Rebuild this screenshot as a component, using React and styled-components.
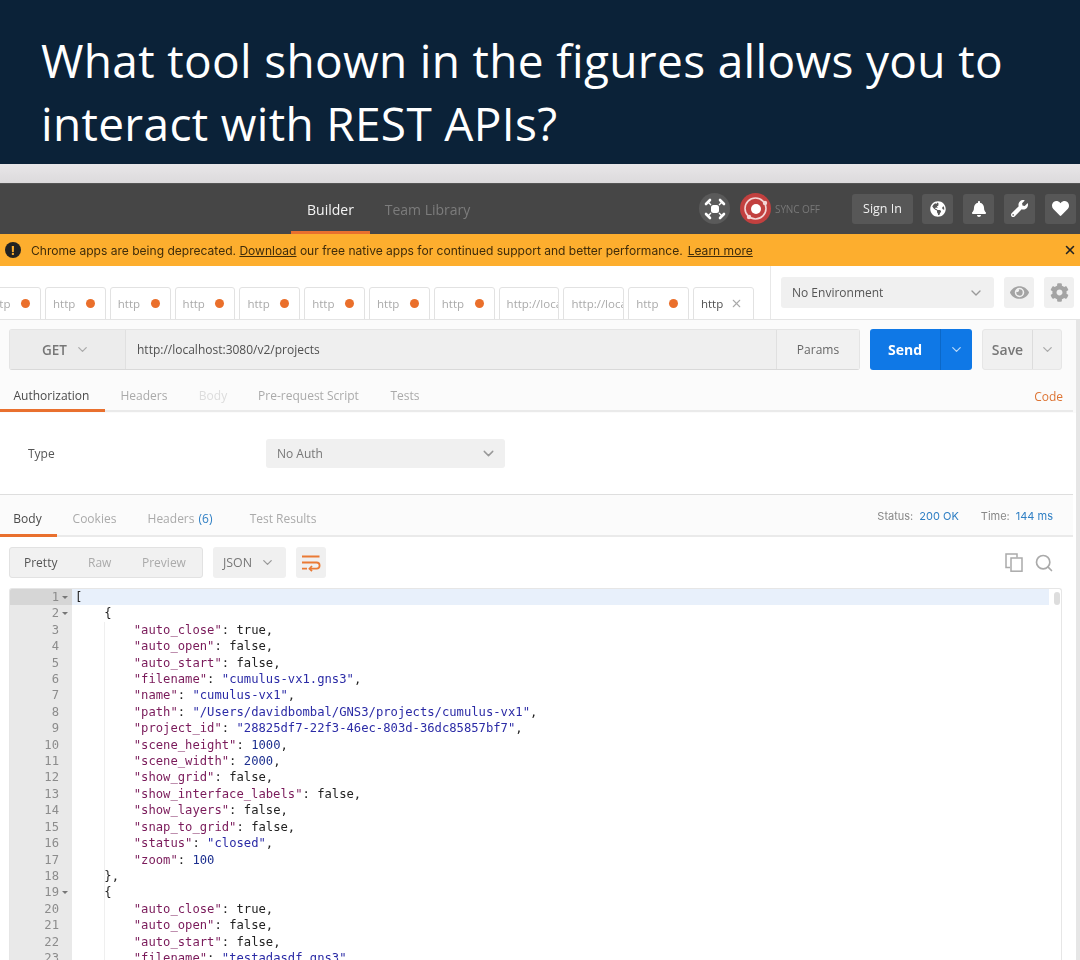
import React from "react";
import styled, { createGlobalStyle } from "styled-components";
import { ChevronDown, X, Search } from "lucide-react";
import { FaGlobeAmericas, FaCog, FaEye, FaBell, FaWrench, FaHeart } from "react-icons/fa";

const Global = createGlobalStyle`
  html, body { margin: 0; padding: 0; background: #fff; }
  body { width: 1080px; height: 960px; overflow: hidden; font-family: "Open Sans", sans-serif; }
  * { box-sizing: border-box; }
`;

const Page = styled.div`
  width: 1080px; height: 960px; overflow: hidden; display: flex; flex-direction: column;
`;
const Question = styled.header`
  height: 164px; flex: none; background: #0b2238; color: #fff;
  padding: 29px 0 0 41px;
  font-family: "Open Sans", sans-serif; font-size: 46px; font-weight: 500; line-height: 63px; letter-spacing: 0.33px;
  white-space: nowrap;
`;
const Shot = styled.div`
  flex: 1; min-height: 0; display: flex; flex-direction: column; filter: blur(0.35px);
`;
const Strip = styled.div`
  height: 19px; flex: none; background: linear-gradient(#e8e6e8, #dcdadc);
`;
const TopBar = styled.div`
  height: 51px; flex: none; background: #464646; display: flex; align-items: stretch; padding: 0 4px 0 291px;
  border-top: 1px solid #555;
`;
const NavTab = styled.div`
  display: flex; align-items: center; justify-content: center; height: 100%;
  width: ${p => p.$w}px; font-size: 14px; padding-top: 3px;
  color: ${p => (p.$on ? "#f4f4f4" : "#7c7c7c")};
  border-bottom: 3px solid ${p => (p.$on ? "#e9702e" : "transparent")};
  margin-left: ${p => p.$ml || 0}px;
`;
const TopRight = styled.div`
  margin-left: auto; display: flex; align-items: center; height: 100%; padding-bottom: 1px;
`;
const RoundIcon = styled.div`
  width: 31px; height: 31px; border-radius: 50%; background: ${p => p.$bg};
  display: flex; align-items: center; justify-content: center; flex: none;
  margin-right: ${p => p.$mr}px;
`;
const SyncLabel = styled.span`
  font-size: 10px; color: #787878; width: 47px; margin-right: 30px; white-space: nowrap; letter-spacing: -0.1px;
`;
const SignIn = styled.div`
  width: 61px; height: 30px; background: #575757; border-radius: 3px; color: #f0f0f0; font-size: 12.5px;
  display: flex; align-items: center; justify-content: center; margin-right: 9px;
`;
const TopIcon = styled.div`
  width: 31px; height: 30px; background: #575757; border-radius: 3px; color: #fff;
  display: flex; align-items: center; justify-content: center; margin-left: ${p => p.$ml || 0}px;
`;
const Banner = styled.div`
  height: 32px; flex: none; background: #fdae2e; display: flex; align-items: center; padding: 0 3px 0 5px;
  font-family: Inter, sans-serif; font-size: 12.06px; color: #3f2c0a; white-space: nowrap;
`;
const Alert = styled.span`
  width: 16px; height: 16px; border-radius: 50%; background: #222; color: #fdae2e; font-weight: 800; font-size: 12px;
  display: flex; align-items: center; justify-content: center; margin-right: 10px; flex: none;
`;
const BannerLink = styled.span`
  text-decoration: underline; margin-left: ${p => p.$ml || 0}px;
`;
const BannerClose = styled.span`
  margin-left: auto; display: flex; color: #222;
`;
const TabRow = styled.div`
  height: 54px; flex: none; display: flex; background: #fff; border-bottom: 1px solid #e4e4e4;
`;
const TabStrip = styled.div`
  width: 771px; flex: none; display: flex; align-items: flex-end; gap: 4px; overflow: hidden;
  border-right: 1px solid #e8e8e8;
`;
const ReqTab = styled.div`
  flex: none; width: 60.8px; height: 33px; margin-bottom: -1px; border: 1px solid #e2e2e2; border-radius: 3px 3px 0 0;
  display: flex; align-items: center; padding: 0 ${p => (p.$cut ? 0 : 10)}px 0 7px; font-size: 11.5px;
  color: ${p => (p.$on ? "#505050" : "#aaa")}; overflow: hidden; white-space: nowrap;
  background: #fff;
  &:first-child { margin-left: -19.8px; }
`;
const Dot = styled.span`
  width: 9px; height: 9px; border-radius: 50%; background: #ea6f2b; margin-left: auto; flex: none;
`;
const TabClose = styled.span`
  margin-left: auto; color: #aaa; display: flex;
`;
const EnvArea = styled.div`
  flex: 1; display: flex; align-items: flex-start; padding: 11px 0 0 10px; gap: 10px;
`;
const EnvSelect = styled.div`
  width: 213px; height: 31px; background: #f0f0f0; border-radius: 3px; display: flex; align-items: center;
  justify-content: space-between; padding: 0 10px 0 11px; font-size: 12px; color: #555;
`;
const EnvBtn = styled.div`
  width: 30px; height: 31px; background: #f0f0f0; border-radius: 3px; color: #a4a4a4;
  display: flex; align-items: center; justify-content: center;
`;
const Body = styled.div`
  flex: 1; min-height: 0; display: flex; background: #fff;
`;
const Main = styled.div`
  width: 1076px; flex: none; display: flex; flex-direction: column; min-height: 0;
`;
const PageBar = styled.div`
  flex: 1; background: #e6e6e6;
`;
const RequestPanel = styled.div`
  height: 93px; flex: none; background: #fbfbfb; padding: 9px 14px 0 9px; display: flex; flex-direction: column;
`;
const RequestRow = styled.div`
  display: flex; height: 41px; flex: none;
`;
const UrlGroup = styled.div`
  width: 851px; display: flex; background: #efefef; border: 1px solid #e4e4e4; border-bottom-color: #d9d9d9; border-radius: 3px;
`;
const Method = styled.div`
  width: 116px; background: #ececec; border-right: 1px solid #e0e0e0; display: flex; align-items: center;
  padding-left: 32px; gap: 8px; font-size: 13.5px; font-weight: 600; color: #777;
`;
const Url = styled.div`
  flex: 1; display: flex; align-items: center; padding: 0 0 0 11px; font-size: 12px; color: #505050;
`;
const Params = styled.div`
  width: 83px; border-left: 1px solid #e0e0e0; display: flex; align-items: center; justify-content: center;
  font-size: 12px; color: #666; background: #f1f1f1;
`;
const Send = styled.div`
  width: 102px; margin-left: 10px; background: #0f78e6; border-radius: 3px; display: flex; color: #fff;
`;
const SendLabel = styled.div`
  width: 71px; display: flex; align-items: center; justify-content: center; font-size: 14px; font-weight: 700;
  border-right: 1px solid #0b68c8;
`;
const SendCaret = styled.div`
  flex: 1; display: flex; align-items: center; justify-content: center; color: #b9d8f7;
`;
const Save = styled.div`
  width: 80px; margin-left: 10px; background: #f0f0f0; border: 1px solid #e6e6e6; border-radius: 3px; display: flex; color: #777;
`;
const SaveLabel = styled.div`
  width: 50px; display: flex; align-items: center; justify-content: center; font-size: 14px; font-weight: 600;
  border-right: 1px solid #dcdcdc;
`;
const SaveCaret = styled.div`
  flex: 1; display: flex; align-items: center; justify-content: center; color: #aaa;
`;
const TabsBar = styled.div`
  height: 42px; flex: none; display: flex; align-items: stretch; background: #fbfbfb;
  border-bottom: 2px solid #eaeaea; margin-right: 3px;
`;
const RequestTabs = styled(TabsBar)`
  margin: 9px -11px 0 -9px; height: 33px;
`;
const TextTab = styled.div`
  display: flex; align-items: center; justify-content: center; font-size: 12px; white-space: nowrap;
  width: ${p => p.$w}px; margin-left: ${p => p.$ml || 0}px; height: calc(100% + 2px);
  padding: ${p => p.$pt}px ${p => (p.$on ? 2 : 0)}px 0 0;
  color: ${p => (p.$on ? "#4a4a4a" : p.$faint ? "#dcdcdc" : "#aaa")};
  border-bottom: 3px solid ${p => (p.$on ? "#e9702e" : "transparent")};
`;
const CodeLink = styled.div`
  margin-left: auto; align-self: center; font-size: 12px; color: #dd7433; margin-right: 10px; padding-top: 4px;
`;
const AuthPanel = styled.div`
  height: 82px; flex: none; background: #fff; border-bottom: 1px solid #dedede; display: flex; align-items: center;
  padding: 0 0 0 28px; margin-right: 3px;
`;
const TypeLabel = styled.div`
  width: 238px; font-size: 12px; color: #555;
`;
const AuthSelect = styled.div`
  width: 239px; height: 29px; background: #f0f0f0; border-radius: 3px; display: flex; align-items: center;
  justify-content: space-between; padding: 0 8px 0 11px; font-size: 12px; color: #777;
`;
const StatusBar = styled.div`
  margin-left: auto; align-self: center; padding: 2px 20px 0 0; display: flex; font-family: Inter, sans-serif; font-size: 11px; color: #888;
`;
const StatusKey = styled.span`
  margin-left: ${p => p.$ml || 0}px;
`;
const StatusValue = styled.span`
  color: #2f7fc4; margin-left: 6px;
`;
const Count = styled.span`
  color: #2f7fc4; margin-left: 4px;
`;
const ResponseBody = styled.div`
  flex: 1; min-height: 0; display: flex; flex-direction: column; background: #fff; padding: 10px 14px 0 9px;
`;
const Toolbar = styled.div`
  height: 31px; flex: none; display: flex; align-items: stretch; margin-bottom: 10px;
`;
const ViewGroup = styled.div`
  width: 194px; display: flex; background: #f1f1f1; border: 1px solid #e2e2e2; border-radius: 3px; align-items: center;
  padding-left: 14px; font-size: 12px; color: #aaa;
`;
const ViewItem = styled.span`
  width: ${p => p.$w}px; color: ${p => (p.$on ? "#555" : "#aaa")};
`;
const LangSelect = styled.div`
  width: 73px; margin-left: 10px; background: #f0f0f0; border-radius: 3px; display: flex; align-items: center;
  padding-left: 10px; gap: 8px; font-size: 12.4px; color: #777;
`;
const WrapBtn = styled.div`
  width: 30px; margin-left: 10px; background: #f0f0f0; border-radius: 3px; display: flex; align-items: center; justify-content: center;
`;
const ToolIcons = styled.div`
  margin-left: auto; display: flex; align-items: center; gap: 11px; color: #aaa; padding-right: 8px;
`;
const Editor = styled.div`
  flex: 1; min-height: 0; display: flex; overflow: hidden; border: 1px solid #e6e6e6; border-bottom: 0; border-radius: 3px 3px 0 0;
  font-family: "DejaVu Sans Mono", monospace; font-size: 12.2px; line-height: 16.41px;
`;
const Gutter = styled.div`
  width: 62px; flex: none; background: #e9e9e9; color: #8c8c8c;
`;
const GutterLine = styled.div`
  height: 16.41px; padding-right: 13px; text-align: right; position: relative; white-space: nowrap;
  background: ${p => (p.$active ? "#d6d6d6" : "transparent")};
`;
const Fold = styled.span`
  position: absolute; right: 4px; top: 7px; width: 0; height: 0; border-left: 3px solid transparent;
  border-right: 3px solid transparent; border-top: 3px solid #777;
`;
const Code = styled.div`
  flex: 1; min-width: 0; position: relative;
`;
const CodeLine = styled.div`
  height: 16.41px; padding-left: 3px; white-space: pre; color: #222;
  background: ${p => (p.$active ? "#e8f0fb" : "transparent")};
  margin-right: 12px;
`;
const Guide = styled.div`
  position: absolute; left: 32px; top: 33px; bottom: 0; width: 1px; background: #efefef;
`;
const Thumb = styled.div`
  position: absolute; right: 1px; top: 3px; width: 6px; height: 13px; border-radius: 3px; background: #ddd;
`;
const KeyTok = styled.span` color: #7a1a5a; `;
const StrTok = styled.span` color: #2b2ba6; `;
const NumTok = styled.span` color: #1c2f8f; `;

const SatelliteIcon = () => (
  <svg width="24" height="24" viewBox="0 0 24 24" fill="none" stroke="#fff">
    <rect x="8" y="8" width="8" height="8" rx="2.5" fill="#fff" stroke="none" />
    <path d="M8 8 5.5 5.5M16 8l2.5-2.5M8 16l-2.5 2.5M16 16l2.5 2.5" strokeWidth="1.4" />
    <path d="M3 7 7 3M17 3l4 4M3 17l4 4M21 17l-4 4" strokeWidth="2.6" strokeLinecap="round" />
  </svg>
);
const SyncIcon = () => (
  <svg width="27" height="27" viewBox="0 0 27 27" fill="none">
    <circle cx="13.5" cy="13.5" r="10.5" stroke="#f3d6d6" strokeWidth="1.6" />
    <circle cx="14" cy="14" r="5" fill="#fff" />
    <circle cx="23" cy="8" r="2.2" fill="#f3d6d6" />
    <circle cx="7" cy="22" r="2.2" fill="#f3d6d6" />
  </svg>
);
const WrapIcon = () => (
  <svg width="20" height="18" viewBox="0 0 20 18" fill="none" stroke="#ea7a35" strokeWidth="1.8">
    <path d="M1 2.5h17.5M1 8.5h14.5a2.8 2.8 0 0 1 0 6.2H9" />
    <path d="M1 14.7h5M11 12l-2.5 2.7L11 17.2" />
  </svg>
);
const CopyIcon = () => (
  <svg width="18" height="19" viewBox="0 0 18 19" fill="none" stroke="#aaa" strokeWidth="1.5">
    <path d="M5 14.5H1V1h11v3.5" />
    <rect x="6" y="5" width="11" height="13.2" />
  </svg>
);

const kv = (k, v, t) => ({ k, v, t });
const obj = [
  kv("auto_close", "true"), kv("auto_open", "false"), kv("auto_start", "false"),
  kv("filename", "cumulus-vx1.gns3", "s"), kv("name", "cumulus-vx1", "s"),
  kv("path", "/Users/davidbombal/GNS3/projects/cumulus-vx1", "s"),
  kv("project_id", "28825df7-22f3-46ec-803d-36dc85857bf7", "s"),
  kv("scene_height", "1000", "n"), kv("scene_width", "2000", "n"),
  kv("show_grid", "false"), kv("show_interface_labels", "false"), kv("show_layers", "false"),
  kv("snap_to_grid", "false"), kv("status", "closed", "s"), kv("zoom", "100", "n"),
];
const lines = [
  { raw: "[", fold: true },
  { raw: "    {", fold: true },
  ...obj,
  { raw: "    }," },
  { raw: "    {", fold: true },
  kv("auto_close", "true"), kv("auto_open", "false"), kv("auto_start", "false"),
  kv("filename", "testadasdf.gns3", "s"),
];

const Value = ({ l }) => {
  if (l.t === "s") return <StrTok>"{l.v}"</StrTok>;
  if (l.t === "n") return <NumTok>{l.v}</NumTok>;
  return l.v;
};

const tabs = Array.from({ length: 12 });

export default function App() {
  return (
    <Page>
      <Global />
      <Question>What tool shown in the figures allows you to<br />interact with REST APIs?</Question>
      <Shot>
        <Strip />
        <TopBar>
          <NavTab $w={79} $on>Builder</NavTab>
          <NavTab $w={87} $ml={14}>Team Library</NavTab>
          <TopRight>
            <RoundIcon $bg="#5a5a5a" $mr={10}><SatelliteIcon /></RoundIcon>
            <RoundIcon $bg="#c2403f" $mr={4}><SyncIcon /></RoundIcon>
            <SyncLabel>SYNC OFF</SyncLabel>
            <SignIn>Sign In</SignIn>
            <TopIcon><FaGlobeAmericas size={16} /></TopIcon>
            <TopIcon $ml={10}><FaBell size={16} /></TopIcon>
            <TopIcon $ml={10}><FaWrench size={17} /></TopIcon>
            <TopIcon $ml={10}><FaHeart size={17} /></TopIcon>
          </TopRight>
        </TopBar>
        <Banner>
          <Alert>!</Alert>
          Chrome apps are being deprecated.&nbsp;<BannerLink>Download</BannerLink>&nbsp;our free native apps for continued support and better performance.
          <BannerLink $ml={5}>Learn more</BannerLink>
          <BannerClose><X size={14} strokeWidth={2.6} /></BannerClose>
        </Banner>
        <TabRow>
          <TabStrip>
            {tabs.map((_, i) => {
              const long = i === 8 || i === 9;
              if (i === 11) return <ReqTab key={i} $on>http<TabClose><X size={13} /></TabClose></ReqTab>;
              return (
                <ReqTab key={i} $cut={long}>
                  {long ? "http://loca" : "http"}
                  {!long && <Dot />}
                </ReqTab>
              );
            })}
          </TabStrip>
          <EnvArea>
            <EnvSelect>No Environment<ChevronDown size={16} color="#999" /></EnvSelect>
            <EnvBtn><FaEye size={19} /></EnvBtn>
            <EnvBtn><FaCog size={19} /></EnvBtn>
          </EnvArea>
        </TabRow>
        <Body>
          <Main>
            <RequestPanel>
              <RequestRow>
                <UrlGroup>
                  <Method>GET<ChevronDown size={15} color="#aaa" /></Method>
                  <Url>http://localhost:3080/v2/projects</Url>
                  <Params>Params</Params>
                </UrlGroup>
                <Send>
                  <SendLabel>Send</SendLabel>
                  <SendCaret><ChevronDown size={15} /></SendCaret>
                </Send>
                <Save>
                  <SaveLabel>Save</SaveLabel>
                  <SaveCaret><ChevronDown size={15} /></SaveCaret>
                </Save>
              </RequestRow>
              <RequestTabs>
                <TextTab $pt={2} $w={105} $on>Authorization</TextTab>
                <TextTab $pt={2} $w={48} $ml={15}>Headers</TextTab>
                <TextTab $pt={2} $w={30} $ml={30} $faint>Body</TextTab>
                <TextTab $pt={2} $w={103} $ml={29}>Pre-request Script</TextTab>
                <TextTab $pt={2} $w={30} $ml={30}>Tests</TextTab>
                <CodeLink>Code</CodeLink>
              </RequestTabs>
            </RequestPanel>
            <AuthPanel>
              <TypeLabel>Type</TypeLabel>
              <AuthSelect>No Auth<ChevronDown size={17} color="#999" /></AuthSelect>
            </AuthPanel>
            <TabsBar>
              <TextTab $pt={8} $w={57} $on>Body</TextTab>
              <TextTab $pt={8} $w={45} $ml={15}>Cookies</TextTab>
              <TextTab $pt={8} $w={68} $ml={29}>Headers<Count>(6)</Count></TextTab>
              <TextTab $pt={8} $w={68} $ml={35}>Test Results</TextTab>
              <StatusBar>
                <StatusKey>Status:</StatusKey><StatusValue>200 OK</StatusValue>
                <StatusKey $ml={22}>Time:</StatusKey><StatusValue>144 ms</StatusValue>
              </StatusBar>
            </TabsBar>
            <ResponseBody>
              <Toolbar>
                <ViewGroup>
                  <ViewItem $w={64} $on>Pretty</ViewItem>
                  <ViewItem $w={54}>Raw</ViewItem>
                  <ViewItem $w={50}>Preview</ViewItem>
                </ViewGroup>
                <LangSelect>JSON<ChevronDown size={15} color="#999" /></LangSelect>
                <WrapBtn><WrapIcon /></WrapBtn>
                <ToolIcons>
                  <CopyIcon />
                  <Search size={20} />
                </ToolIcons>
              </Toolbar>
              <Editor>
                <Gutter>
                  {lines.map((l, i) => (
                    <GutterLine key={i} $active={i === 0}>
                      {i + 1}
                      {l.fold && <Fold />}
                    </GutterLine>
                  ))}
                </Gutter>
                <Code>
                  <Guide />
                  {lines.map((l, i) => (
                    <CodeLine key={i} $active={i === 0}>
                      {l.raw ? l.raw : (
                        <>
                          {"        "}<KeyTok>"{l.k}"</KeyTok>: <Value l={l} />{l.k === "zoom" ? "" : ","}
                        </>
                      )}
                    </CodeLine>
                  ))}
                  <Thumb />
                </Code>
              </Editor>
            </ResponseBody>
          </Main>
          <PageBar />
        </Body>
      </Shot>
    </Page>
  );
}
